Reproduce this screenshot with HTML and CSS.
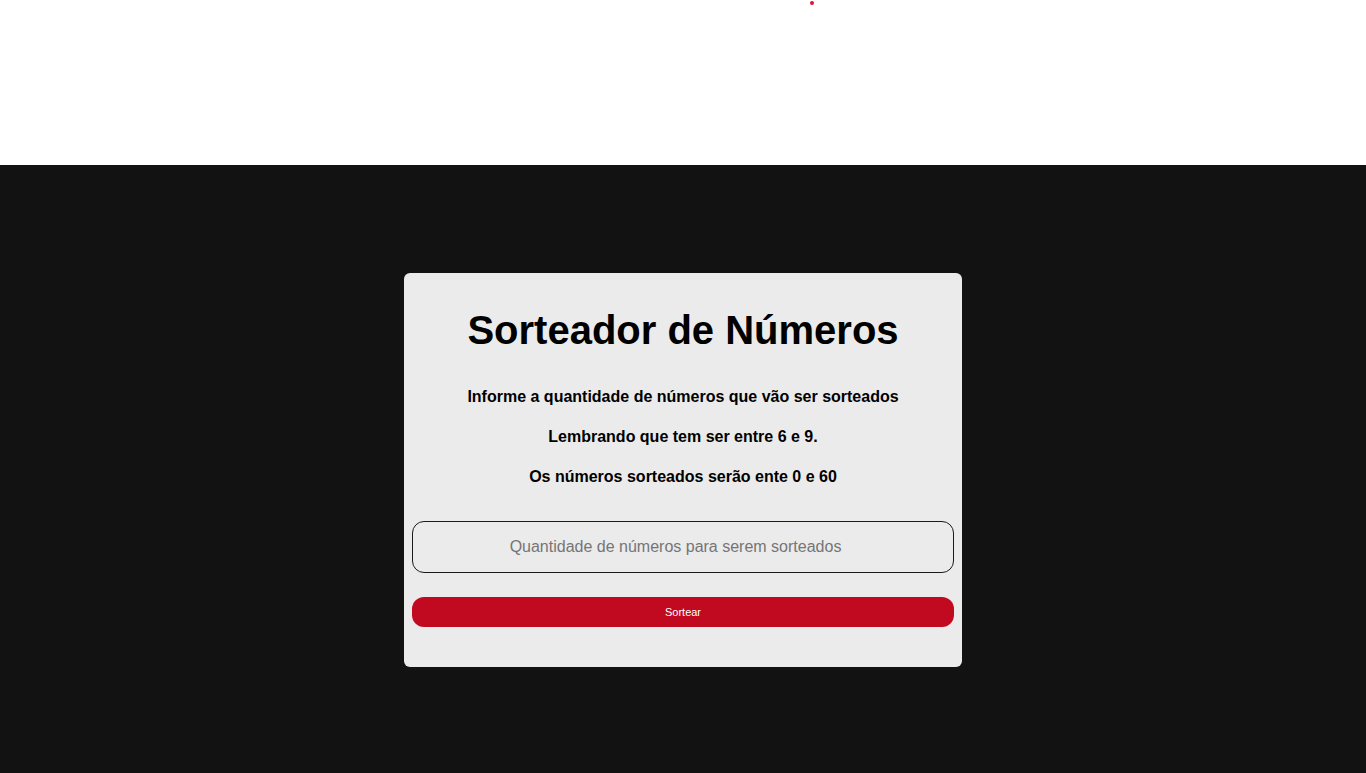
FILE: index.html
```html
<!DOCTYPE html>
<html>
<head>
  <title>Sorteador de Números</title>
  <link rel="stylesheet" href="styles.css">
</head>
<body>
  <header class="top">
    <span class="dot"></span>
  </header>

  <main class="stage">
    <div class="card">
      <h1>Sorteador de Números</h1>
      <div class="hints">
        <p>Informe a quantidade de números que vão ser sorteados</p>
        <p>Lembrando que tem ser entre 6 e 9.</p>
        <p>Os números sorteados serão ente 0 e 60</p>
      </div>
      <input type="number" id="quantidade" placeholder="Quantidade de números para serem sorteados">
      <button onclick="sortear()">Sortear</button>
    </div>
  </main>

  <script>
    function sortear() {
      var qtd = parseInt(document.getElementById("quantidade").value);
      if (isNaN(qtd) || qtd < 6 || qtd > 9) {
        alert("Informe um número entre 6 e 9");
        return;
      }
      var numeros = [];
      while (numeros.length < qtd) {
        var n = Math.floor(Math.random() * 61);
        if (numeros.indexOf(n) === -1) numeros.push(n);
      }
      alert(numeros.join(" - "));
    }
  </script>
</body>
</html>
```

FILE: styles.css
```css
* {
  box-sizing: border-box;
}

body {
  margin: 0;
  font-family: "Liberation Sans", Arial, sans-serif;
  background-color: #fff;
}

.top {
  height: 165px;
  background-color: #fff;
  padding: 1px 0 0 810px;
}

.dot {
  display: block;
  width: 4px;
  height: 4px;
  border-radius: 50%;
  background-color: #e8102c;
}

.stage {
  height: 608px;
  background-color: #121212;
  display: flex;
  justify-content: center;
  align-items: center;
  padding-top: 2px;
}

.card {
  width: 558px;
  padding: 8px 8px 40px;
  background-color: #ebebeb;
  border-radius: 6px;
  text-align: center;
}

h1 {
  font-size: 40px;
  line-height: 46px;
  margin: 26px 0 32px;
  color: #000;
}

.hints p {
  font-size: 16px;
  font-weight: bold;
  line-height: 24px;
  margin: 0 0 16px;
  color: #000;
}

.hints p:last-child {
  margin-bottom: 0;
}

input[type="number"] {
  display: block;
  width: 100%;
  height: 52px;
  margin-top: 32px;
  padding: 0;
  border: 1px solid #1a1a1a;
  border-radius: 12px;
  background-color: transparent;
  font-family: "Liberation Sans", Arial, sans-serif;
  font-size: 16px;
  text-align: center;
}

input::placeholder {
  color: #757575;
}

button {
  display: block;
  width: 100%;
  height: 30px;
  margin-top: 24px;
  border: none;
  border-radius: 12px;
  background-color: #c1091f;
  color: #fff;
  font-family: "Liberation Sans", Arial, sans-serif;
  font-size: 11px;
  cursor: pointer;
}
```
